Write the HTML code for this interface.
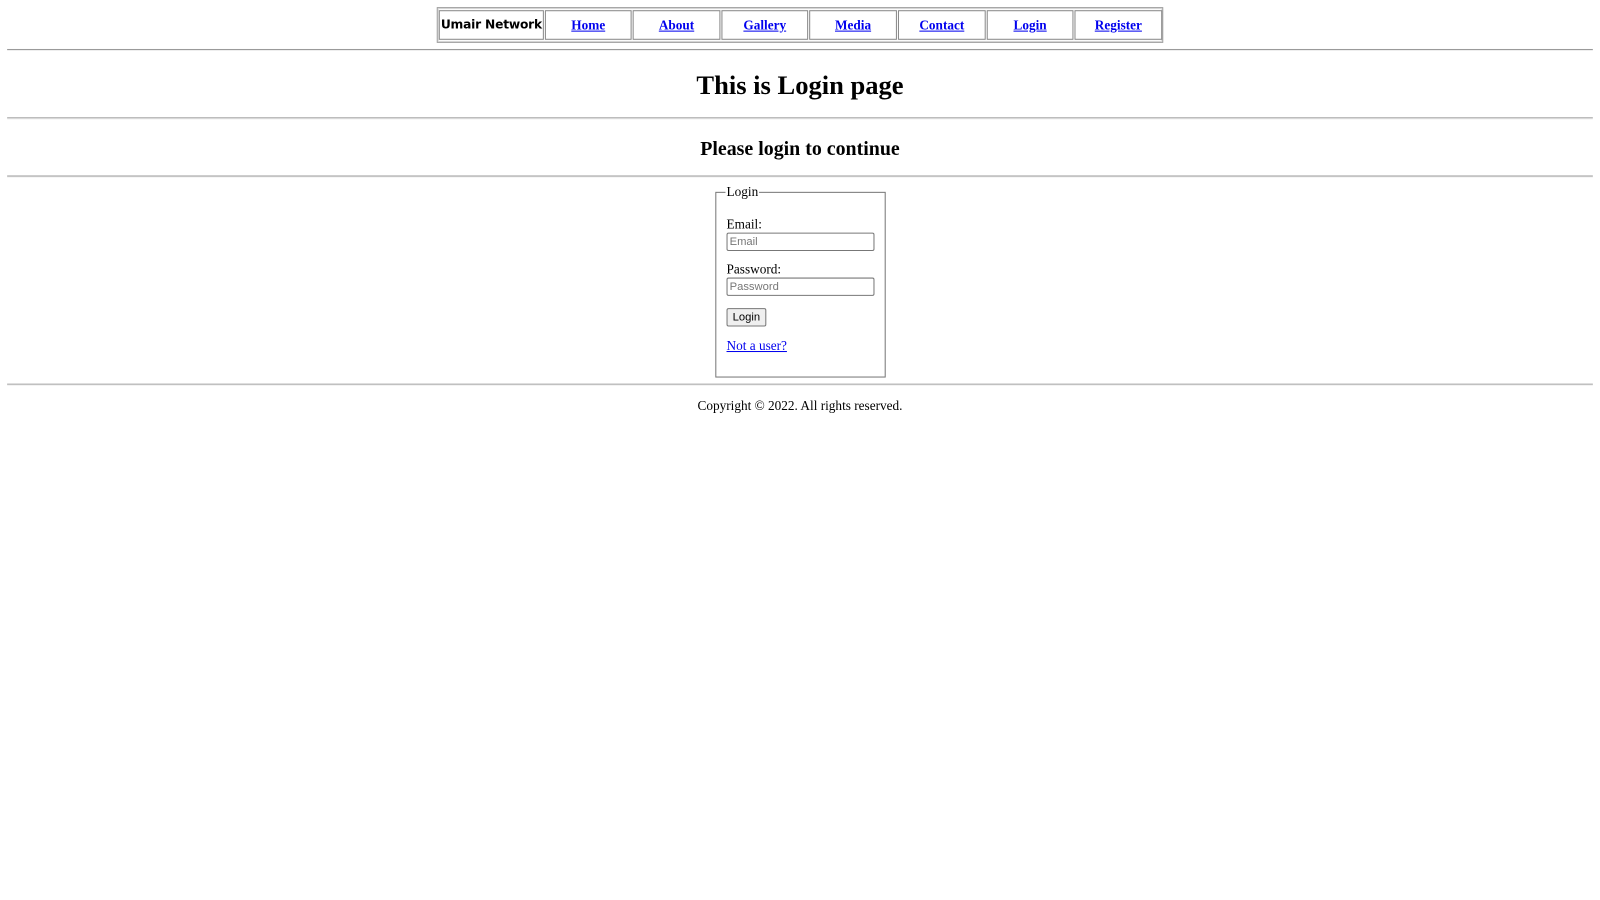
<!DOCTYPE html>
<html><head><meta charset="utf-8"><style>
body{margin:0;width:1600px;height:900px;background:#fff;font-family:"Liberation Serif",serif;color:#000;overflow:hidden}
#w{position:absolute;left:0;top:0;width:1568px;height:882px;transform:scale(1.0204);transform-origin:0 0}
.a{position:absolute}
hr{position:absolute;left:7px;width:1554px;margin:0;border:0;border-top:1px solid #9a9a9a;border-bottom:1px solid #eee;height:0}
.nav{position:absolute;left:428px;top:7px;width:710px;height:33px;border:1px solid #999;box-shadow:inset 0 0 0 1px #ddd}
.cell{position:absolute;top:2px;height:29px;border:1px solid #888;box-sizing:border-box;text-align:center;font-weight:bold;font-size:13px;line-height:28px}
.cell a{color:#00e;text-decoration:underline}
.b{font-family:"DejaVu Sans","Liberation Sans",sans-serif;font-size:12px;text-align:left;line-height:27px;white-space:nowrap;overflow:hidden;padding-left:1px;letter-spacing:-0.2px}
.c{left:0;width:1568px;text-align:center;font-weight:bold}
fieldset{position:absolute;left:701px;top:180px;width:144px;height:188px;border:1px solid #777;margin:0;padding:0 10px;font-size:13px}
legend{padding:0 1px;margin-left:-1px}
input{display:block;width:139px;height:14px;font-size:11px;font-family:"Liberation Sans",sans-serif;border:1px solid #777;border-radius:2px;padding:1px 2px;margin:0;color:#777}
button{font-family:"Liberation Sans",sans-serif;font-size:11px;padding:1px 5px;border:1px solid #777;border-radius:2px;background:#efefef;height:18px}
</style></head><body><div id="w">
<div class="nav">
<div class="cell b" style="left:1px;width:103px">Umair Network</div>
<div class="cell" style="left:105px;width:85px"><a>Home</a></div>
<div class="cell" style="left:191px;width:86px"><a>About</a></div>
<div class="cell" style="left:278px;width:85px"><a>Gallery</a></div>
<div class="cell" style="left:364px;width:86px"><a>Media</a></div>
<div class="cell" style="left:451px;width:86px"><a>Contact</a></div>
<div class="cell" style="left:538px;width:85px"><a>Login</a></div>
<div class="cell" style="left:624px;width:86px"><a>Register</a></div>
</div>
<hr style="top:48px">
<div class="a c" style="top:69px;font-size:26px">This is Login page</div>
<hr style="top:115px">
<div class="a c" style="top:136px;font-size:19.5px">Please login to continue</div>
<hr style="top:172px">
<fieldset><legend>Login</legend>
<div style="margin-top:16px">Email:</div><input value="Email">
<div style="margin-top:10px">Password:</div><input value="Password">
<div style="margin-top:12px"><button>Login</button></div>
<div style="margin-top:11px"><a style="color:#00e;text-decoration:underline">Not a user?</a></div>
</fieldset>
<hr style="top:376px">
<div class="a c" style="top:390px;font-size:13px;font-weight:normal">Copyright © 2022. All rights reserved.</div>
</div></body></html>
